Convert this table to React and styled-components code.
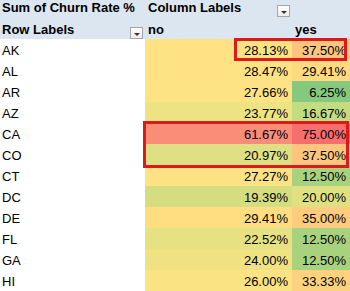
import React from 'react'
import styled, { createGlobalStyle } from 'styled-components'

const rows = [
  { state: 'AK', no: '28.13%', noBg: '#fee283', yes: '37.50%', yesBg: '#fdc57d' },
  { state: 'AL', no: '28.47%', noBg: '#fee283', yes: '29.41%', yesBg: '#ffda81' },
  { state: 'AR', no: '27.66%', noBg: '#fde383', yes: '6.25%', yesBg: '#86c87d' },
  { state: 'AZ', no: '23.77%', noBg: '#eee383', yes: '16.67%', yesBg: '#c3db81' },
  { state: 'CA', no: '61.67%', noBg: '#f98d78', yes: '75.00%', yesBg: '#f66f6e' },
  { state: 'CO', no: '20.97%', noBg: '#dfe083', yes: '37.50%', yesBg: '#fdc57d' },
  { state: 'CT', no: '27.27%', noBg: '#fde283', yes: '12.50%', yesBg: '#a9d27f' },
  { state: 'DC', no: '19.39%', noBg: '#d4dd80', yes: '20.00%', yesBg: '#dfe082' },
  { state: 'DE', no: '29.41%', noBg: '#ffde82', yes: '35.00%', yesBg: '#fdcc7e' },
  { state: 'FL', no: '22.52%', noBg: '#e6e182', yes: '12.50%', yesBg: '#a9d27f' },
  { state: 'GA', no: '24.00%', noBg: '#f0e283', yes: '12.50%', yesBg: '#a9d27f' },
  { state: 'HI', no: '26.00%', noBg: '#fae383', yes: '33.33%', yesBg: '#fdd27f' },
]

const Global = createGlobalStyle`
  body {
    margin: 0;
    background: #fff;
    overflow: hidden;
  }
`

const Sheet = styled.div`
  position: relative;
  width: 350px;
  height: 291px;
  overflow: hidden;
  font-family: "Liberation Sans", Arial, sans-serif;
  font-size: 13px;
  color: #000;
`

const Row = styled.div`
  display: grid;
  grid-template-columns: 145px 147px 58px;
  height: ${p => p.h}px;
`

const HeadCell = styled.div`
  display: flex;
  align-items: flex-start;
  justify-content: space-between;
  background: #dce6f1;
  font-weight: bold;
  padding-left: ${p => p.pl || 3}px;
  padding-right: 2px;
  line-height: ${p => p.lh}px;
  white-space: nowrap;
  border-bottom: ${p => (p.line ? '1px solid #b8cce4' : 'none')};
  box-sizing: border-box;
`

const Label = styled.div`
  background: #fff;
  padding: 3px 0 0 2px;
  line-height: 18px;
`

const Value = styled.div`
  background: ${p => p.bg};
  padding: 3px 4px 0 0;
  line-height: 18px;
  text-align: right;
`

const Drop = styled.span`
  width: 11px;
  height: 10px;
  margin-top: ${p => p.top}px;
  border: 1px solid #a6a6a6;
  background: linear-gradient(#fdfdfd, #ececec);
  display: flex;
  align-items: center;
  justify-content: center;
  flex-shrink: 0;

  &::after {
    content: '';
    margin-top: 2px;
    border-left: 3px solid transparent;
    border-right: 3px solid transparent;
    border-top: 3px solid #333;
  }
`

const Mark = styled.div`
  position: absolute;
  left: ${p => p.x}px;
  top: ${p => p.y}px;
  width: ${p => p.w}px;
  height: ${p => p.h}px;
  border: 3px solid #dc1a1c;
  box-sizing: border-box;
  pointer-events: none;
`

export default function App() {
  return (
    <Sheet>
      <Global />
      <Row h={20}>
        <HeadCell pl={2} lh={16}>Sum of Churn Rate %</HeadCell>
        <HeadCell lh={16}>
          Column Labels
          <Drop top={5} />
        </HeadCell>
        <HeadCell lh={16} />
      </Row>
      <Row h={19}>
        <HeadCell pl={2} lh={19} line>
          Row Labels
          <Drop top={7} />
        </HeadCell>
        <HeadCell lh={19} line>no</HeadCell>
        <HeadCell lh={19} line>yes</HeadCell>
      </Row>
      {rows.map(r => (
        <Row h={21} key={r.state}>
          <Label>{r.state}</Label>
          <Value bg={r.noBg}>{r.no}</Value>
          <Value bg={r.yesBg}>{r.yes}</Value>
        </Row>
      ))}
      <Mark x={234} y={38} w={113} h={23} />
      <Mark x={143} y={121} w={206} h={47} />
    </Sheet>
  )
}
